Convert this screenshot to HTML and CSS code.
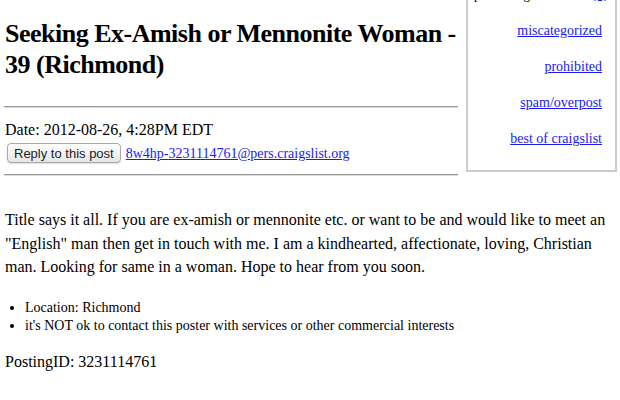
FILE: index.html
```html
<!DOCTYPE html>
<html lang="en">
<head>
    <meta charset="UTF-8">
    <title>Seeking Ex-Amish or Mennonite Woman - 39 (Richmond)</title>
    <link rel="stylesheet" href="styles.css">
</head>
<body>
    <div class="page">
        <div class="top">
            <div class="header">
                <h2 class="title">Seeking Ex-Amish or Mennonite Woman - 39 (Richmond)</h2>
                <hr>
                <div class="date">Date: 2012-08-26, 4:28PM EDT</div>
                <div class="reply-row">
                    <button class="reply-btn">Reply to this post</button>
                    <a href="#" class="email">8w4hp-3231114761@pers.craigslist.org</a>
                </div>
                <hr>
            </div>
            <div class="flag-box">
                <div class="flag-head"><span>please flag with care:</span> <a href="#">[?]</a></div>
                <div class="flag-link"><a href="#">miscategorized</a></div>
                <div class="flag-link"><a href="#">prohibited</a></div>
                <div class="flag-link"><a href="#">spam/overpost</a></div>
                <div class="flag-link"><a href="#">best of craigslist</a></div>
            </div>
        </div>

        <div class="body-text">
            Title says it all. If you are ex-amish or mennonite etc. or want to be and would like to meet an "English" man then get in touch with me. I am a kindhearted, affectionate, loving, Christian man. Looking for same in a woman. Hope to hear from you soon.
        </div>

        <ul class="notices">
            <li>Location: Richmond</li>
            <li>it's NOT ok to contact this poster with services or other commercial interests</li>
        </ul>

        <div class="posting-id">PostingID: 3231114761</div>
    </div>
</body>
</html>
```

FILE: styles.css
```css
body {
    margin: 0;
    font-family: "Liberation Serif", "Times New Roman", serif;
    color: #000;
    background: #fff;
}
a {
    color: #1a1aee;
}
.page {
    padding: 0 3px 0 5px;
}
.top {
    display: flex;
    align-items: flex-start;
}
.header {
    flex: 0 0 454px;
    margin-left: -1px;
}
.title {
    margin: 18px 0 0 1px;
    font-size: 26px;
    line-height: 31px;
    letter-spacing: -0.5px;
    font-weight: bold;
}
hr {
    margin: 26px 0 0;
    height: 0;
    border: 0;
    border-top: 1px solid #999;
    border-bottom: 1px solid #ddd;
}
.date {
    margin: 11px 0 0 1px;
    font-size: 16px;
    line-height: 22px;
}
.reply-row {
    display: flex;
    align-items: center;
    gap: 5px;
    height: 22px;
    margin: 1px 0 0 3px;
}
.reply-btn {
    height: 20px;
    padding: 0 6px;
    font-family: "Liberation Sans", Arial, sans-serif;
    font-size: 13px;
    color: #222;
    background: linear-gradient(#ffffff, #e6e6e6);
    border: 1px solid #a8a8a8;
    border-radius: 4px;
    box-shadow: 0 1px 1px rgba(0, 0, 0, 0.12);
}
.email {
    font-size: 14px;
    margin-top: 2px;
}
.reply-row + hr {
    margin-top: 10px;
}
.flag-box {
    box-sizing: border-box;
    flex: 0 0 151px;
    min-width: 0;
    margin: -38px 0 0 8px;
    padding: 13px 13px 13px 0;
    border: 2px solid #ccc;
    text-align: right;
    font-size: 14px;
    line-height: 36px;
}
.flag-head {
    display: flex;
    justify-content: space-between;
    padding-left: 6px;
    margin-right: -5px;
    font-size: 13px;
    white-space: nowrap;
}
.body-text {
    margin-top: 32px;
    font-size: 16px;
    line-height: 23.5px;
    width: 612px;
}
.notices {
    margin: 20px 0 0;
    padding-left: 20px;
    font-size: 14px;
    line-height: 18px;
}
.posting-id {
    margin-top: 17px;
    font-size: 16px;
    line-height: 20px;
}
```
